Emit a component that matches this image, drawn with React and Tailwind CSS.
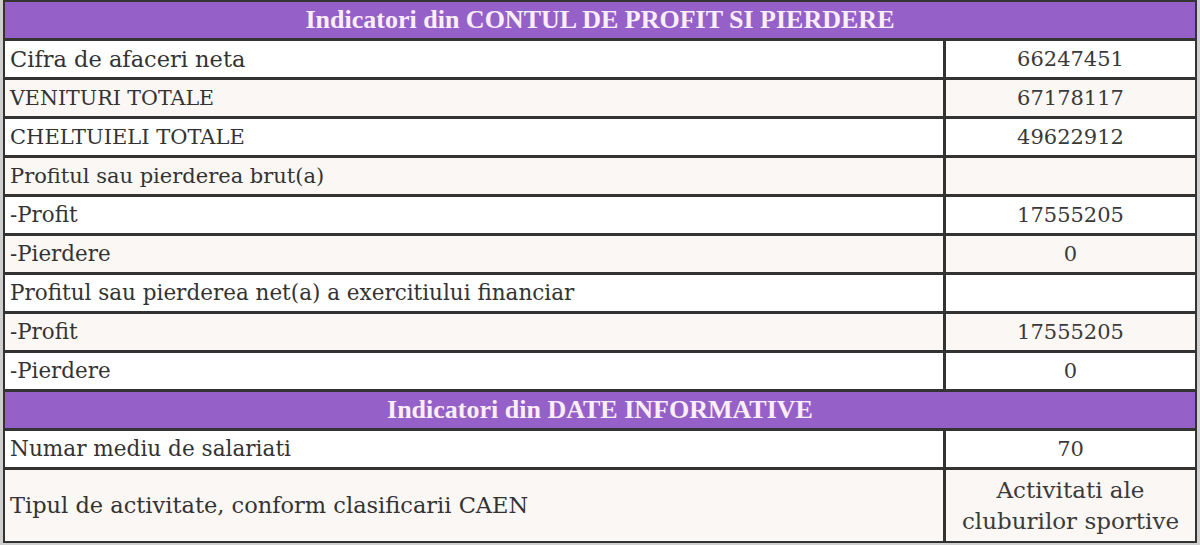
const rows = [
  { label: "Cifra de afaceri neta", value: "66247451", size: "text-[22.5px] text-[#111]" },
  { label: "VENITURI TOTALE", value: "67178117", size: "text-[20.6px]" },
  { label: "CHELTUIELI TOTALE", value: "49622912", size: "text-[21px]" },
  { label: "Profitul sau pierderea brut(a)", value: "", size: "text-[21px]" },
  { label: "-Profit", value: "17555205", size: "text-[21.4px]" },
  { label: "-Pierdere", value: "0", size: "text-[21.4px]" },
  { label: "Profitul sau pierderea net(a) a exercitiului financiar", value: "", size: "text-[21.5px]" },
  { label: "-Profit", value: "17555205", size: "text-[21.4px]" },
  { label: "-Pierdere", value: "0", size: "text-[21.4px]" },
];

const serif = "font-['DejaVu_Serif','Liberation_Serif',serif]";

const Header = ({ children }) => (
  <div className="h-[36px] bg-[#9561c8] flex items-center justify-center text-[26px] font-bold text-[#fbeefa] leading-none font-['Liberation_Serif',serif]">
    {children}
  </div>
);

const Row = ({ label, value, size, odd, tall }) => (
  <div className={`grid grid-cols-[938px_1fr] gap-[3px] ${tall ? "flex-1" : "h-[36px]"}`}>
    <div className={`${odd ? "bg-white" : "bg-[#faf7f5]"} flex items-center pl-[5px] leading-none whitespace-nowrap text-[#333] ${serif} ${size}`}>
      {label}
    </div>
    <div className={`${odd ? "bg-white" : "bg-[#faf7f5]"} flex items-center justify-center text-center text-[21px] text-[#3a3a3a] leading-[31px] ${serif}`}>
      {value}
    </div>
  </div>
);

export default function App() {
  return (
    <div className="w-[1200px] h-[545px] bg-[#cfcfcf] px-[3px] pb-[2px]">
      <div className="h-full bg-[#333] px-[2px] pt-[2px] pb-[2px] flex flex-col gap-[3px]">
        <Header>Indicatori din CONTUL DE PROFIT SI PIERDERE</Header>
        {rows.map((r, i) => (
          <Row key={i} {...r} odd={i % 2 === 0} />
        ))}
        <Header>Indicatori din DATE INFORMATIVE</Header>
        <Row label="Numar mediu de salariati" value="70" size="text-[21.6px]" odd />
        <Row
          label="Tipul de activitate, conform clasificarii CAEN"
          value={<span className="text-[23px]">Activitati ale<br />cluburilor sportive</span>}
          size="text-[22.5px]"
          odd={false}
          tall
        />
      </div>
    </div>
  );
}
